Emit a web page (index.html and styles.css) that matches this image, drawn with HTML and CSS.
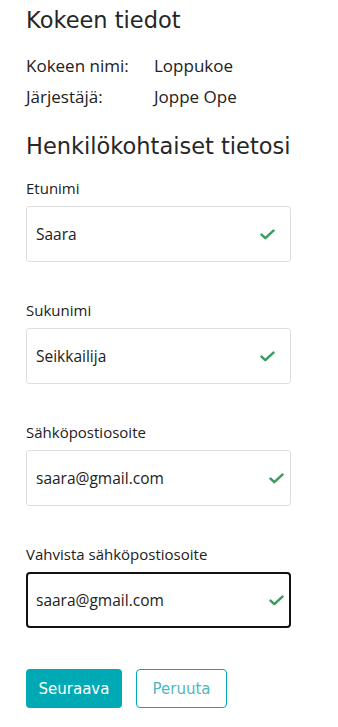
FILE: index.html
```html
<!DOCTYPE html>
<html lang="fi">
<head>
<meta charset="utf-8">
<title>Kokeen tiedot</title>
<link rel="stylesheet" href="styles.css">
</head>
<body>
<main class="page">
  <h1 class="title">Kokeen tiedot</h1>
  <dl class="info">
    <div class="info-row"><dt>Kokeen nimi:</dt><dd>Loppukoe</dd></div>
    <div class="info-row"><dt>Järjestäjä:</dt><dd>Joppe Ope</dd></div>
  </dl>
  <h2 class="title title-2">Henkilökohtaiset tietosi</h2>
  <form class="form">
    <div class="field">
      <label class="label">Etunimi</label>
      <div class="input"><span class="value">Saara</span><svg class="check" viewBox="0 0 16 12"><path d="M1.5 6.2 L5.6 10 L14.5 1.8" fill="none" stroke="#3d9c62" stroke-width="2.8" stroke-linecap="round" stroke-linejoin="round"/></svg></div>
    </div>
    <div class="field">
      <label class="label">Sukunimi</label>
      <div class="input"><span class="value">Seikkailija</span><svg class="check" viewBox="0 0 16 12"><path d="M1.5 6.2 L5.6 10 L14.5 1.8" fill="none" stroke="#3d9c62" stroke-width="2.8" stroke-linecap="round" stroke-linejoin="round"/></svg></div>
    </div>
    <div class="field">
      <label class="label">Sähköpostiosoite</label>
      <div class="input input-email"><span class="value">saara@gmail.com</span><svg class="check" viewBox="0 0 16 12"><path d="M1.5 6.2 L5.6 10 L14.5 1.8" fill="none" stroke="#3d9c62" stroke-width="2.8" stroke-linecap="round" stroke-linejoin="round"/></svg></div>
    </div>
    <div class="field">
      <label class="label">Vahvista sähköpostiosoite</label>
      <div class="input input-email input-focus"><span class="value">saara@gmail.com</span><svg class="check" viewBox="0 0 16 12"><path d="M1.5 6.2 L5.6 10 L14.5 1.8" fill="none" stroke="#3d9c62" stroke-width="2.8" stroke-linecap="round" stroke-linejoin="round"/></svg></div>
    </div>
    <div class="actions">
      <button type="button" class="btn btn-primary">Seuraava</button>
      <button type="button" class="btn btn-outline">Peruuta</button>
    </div>
  </form>
</main>
</body>
</html>
```
FILE: styles.css
```css
html, body {
  margin: 0;
  padding: 0;
  background: #fff;
}
body {
  font-family: "Open Sans", "Liberation Sans", sans-serif;
  color: #212121;
}
.page {
  width: 265px;
  padding: 5px 0 0 26px;
}
.title {
  font-family: "DejaVu Sans", "Open Sans", sans-serif;
  font-weight: normal;
  font-size: 22.5px;
  line-height: 30px;
  margin: 0;
  color: #262626;
  letter-spacing: 0;
  white-space: nowrap;
}
.title-2 {
  margin-top: 19px;
}
.info {
  margin: 15px 0 0 0;
}
.info-row {
  display: flex;
  font-size: 17px;
  line-height: 31px;
}
.info-row dt {
  width: 128px;
}
.info-row dd {
  margin: 0;
}
.form {
  margin-top: 17px;
  display: flex;
  flex-direction: column;
}
.field {
  display: flex;
  flex-direction: column;
  margin-bottom: 38px;
}
.label {
  font-size: 15px;
  line-height: 20px;
  margin-bottom: 8px;
}
.input {
  height: 56px;
  box-sizing: border-box;
  border: 1px solid #dedede;
  border-radius: 3px;
  display: flex;
  align-items: center;
  justify-content: space-between;
  padding: 0 15px 0 9px;
  font-size: 15.5px;
}
.input-email {
  padding-right: 6px;
}
.input-focus {
  border: 2px solid #111;
  border-radius: 4px;
  padding-left: 8px;
  padding-right: 5px;
}
.check {
  width: 15px;
  height: 11px;
}
.actions {
  display: flex;
  gap: 14px;
  margin-top: 3px;
}
.btn {
  font-family: "DejaVu Sans", "Open Sans", sans-serif;
  font-size: 15px;
  height: 39px;
  border-radius: 4px;
  padding: 0;
}
.btn-primary {
  width: 96px;
  background: #00aab5;
  border: none;
  color: #fff;
}
.btn-outline {
  width: 91px;
  background: #fff;
  border: 1px solid #00aab5;
  color: #4db8c2;
}
```
